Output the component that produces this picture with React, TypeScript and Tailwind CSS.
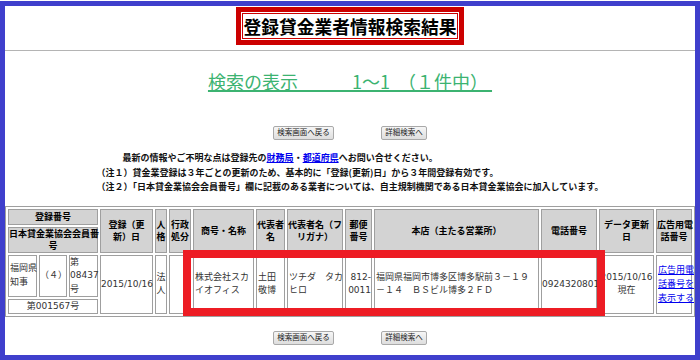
import React from "react";

const cols = [29, 28, 29, 53, 12, 22, 61, 29, 56, 27, 165, 56, 55, 36];

const th =
  "border border-[#9f9f9f] bg-[#d3d3d3] p-0 text-center align-middle text-[9px] font-bold leading-[12px] text-black whitespace-nowrap";
const td =
  "border border-[#9f9f9f] bg-white p-0 align-middle text-[9px] leading-[13.5px] text-[#333] whitespace-nowrap";

function Btn({ label, w }: { label: string; w: string }) {
  return (
    <button
      className={`${w} h-[14px] rounded-[2px] border border-[#a9a9a9] bg-gradient-to-b from-[#f6f6f6] to-[#dedede] px-0 text-center text-[7.5px] leading-[12px] text-[#222]`}
    >
      {label}
    </button>
  );
}

function Buttons() {
  return (
    <div className="flex justify-center gap-[47px]">
      <Btn label="検索画面へ戻る" w="w-[61px]" />
      <Btn label="詳細検索へ" w="w-[46px]" />
    </div>
  );
}

export default function App() {
  return (
    <div className="relative h-[360px] w-[700px] bg-white pt-[1px] font-['DejaVu_Sans','Noto_Sans_CJK_JP',sans-serif]">
      <div className="h-[359px] border-[5px] border-[#3f3fcc] bg-white">
        {/* title */}
        <div className="mt-[1px] flex justify-center">
          <div className="border-[5px] border-[#cc0000] bg-white p-[1px]">
            <div className="border border-[#cc0000] font-['Noto_Sans_CJK_JP',sans-serif] text-[17.75px] font-bold leading-[24px] text-black">
              登録貸金業者情報検索結果
            </div>
          </div>
        </div>
        <div className="mt-[5px] h-px bg-[#b4b4b4]" />

        {/* count */}
        <div className="mt-[18px] text-center">
          <span className="whitespace-pre font-['Noto_Sans_CJK_JP',sans-serif] text-[18px] leading-[24px] text-[#3cb371] underline decoration-[1.5px]">
            {"検索の表示　　　1～1  （１件中） "}
          </span>
        </div>

        <div className="mt-[30px]">
          <Buttons />
        </div>

        {/* notes */}
        <div className="mt-[11px] flex justify-center">
          <div className="text-left font-['Noto_Sans_CJK_JP',sans-serif] text-[9px] font-bold leading-[14.5px] text-[#111]">
            <p className="pl-[26px]">
              最新の情報やご不明な点は登録先の
              <span className="text-[#0000ee] underline">財務局</span>・
              <span className="text-[#0000ee] underline">都道府県</span>
              へお問い合せください。
            </p>
            <p>（注１）貸金業登録は３年ごとの更新のため、基本的に「登録(更新)日」から３年間登録有効です。</p>
            <p>（注２）「日本貸金業協会会員番号」欄に記載のある業者については、自主規制機関である日本貸金業協会に加入しています。</p>
          </div>
        </div>

        {/* result table */}
        <table className="mt-[11px] w-[690px] table-fixed border-separate border-spacing-[2px] border border-[#9f9f9f]">
          <colgroup>
            {cols.map((w, i) => (
              <col key={i} style={{ width: w }} />
            ))}
          </colgroup>
          <thead>
            <tr className="h-[16px]">
              <th colSpan={3} className={th}>登録番号</th>
              <th rowSpan={2} className={th}>登録（更<br />新）日</th>
              <th rowSpan={2} className={th}>人<br />格</th>
              <th rowSpan={2} className={th}>行政<br />処分</th>
              <th rowSpan={2} className={th}>商号・名称</th>
              <th rowSpan={2} className={th}>代表者<br />名</th>
              <th rowSpan={2} className={th}>代表者名（フ<br />リガナ）</th>
              <th rowSpan={2} className={th}>郵便<br />番号</th>
              <th rowSpan={2} className={th}>本店（主たる営業所）</th>
              <th rowSpan={2} className={th}>電話番号</th>
              <th rowSpan={2} className={th}>データ更新<br />日</th>
              <th rowSpan={2} className={th}>広告用電<br />話番号</th>
            </tr>
            <tr className="h-[26px]">
              <th colSpan={3} className={th}>日本貸金業協会会員番<br />号</th>
            </tr>
          </thead>
          <tbody>
            <tr className="h-[41px]">
              <td className={`${td} pl-[1px] text-left`}>福岡県<br />知事</td>
              <td className={`${td} text-center`}>（４）</td>
              <td className={`${td} text-left`}>第<br />08437<br />号</td>
              <td rowSpan={2} className={`${td} text-center`}>2015/10/16</td>
              <td rowSpan={2} className={`${td} text-center`}>法<br />人</td>
              <td rowSpan={2} className={td}></td>
              <td rowSpan={2} className={`${td} pl-[1px] text-left`}>株式会社スカ<br />イオフィス</td>
              <td rowSpan={2} className={`${td} pl-[1px] text-left`}>土田<br />敬博</td>
              <td rowSpan={2} className={`${td} pl-[1px] text-left`}>ツチダ　タカ<br />ヒロ</td>
              <td rowSpan={2} className={`${td} text-right`}>812-<br />0011</td>
              <td rowSpan={2} className={`${td} pl-[1px] text-left`}>福岡県福岡市博多区博多駅前３－１９<br />－１４　ＢＳビル博多２ＦＤ</td>
              <td rowSpan={2} className={`${td} text-center`}>0924320801</td>
              <td rowSpan={2} className={`${td} text-center`}>2015/10/16<br />現在</td>
              <td rowSpan={2} className={`${td} pl-[1px] text-left leading-[14px]`}>
                <span className="text-[#0000ee] underline">広告用電<br />話番号を<br />表示する</span>
              </td>
            </tr>
            <tr className="h-[15px]">
              <td colSpan={3} className={`${td} text-center leading-[13px]`}>第001567号</td>
            </tr>
          </tbody>
        </table>

        <div className="mt-[14px]">
          <Buttons />
        </div>
      </div>

      {/* highlight */}
      <div className="absolute left-[183px] top-[250px] h-[66px] w-[422px] border-[8px] border-[#ed1c24]" />
    </div>
  );
}
